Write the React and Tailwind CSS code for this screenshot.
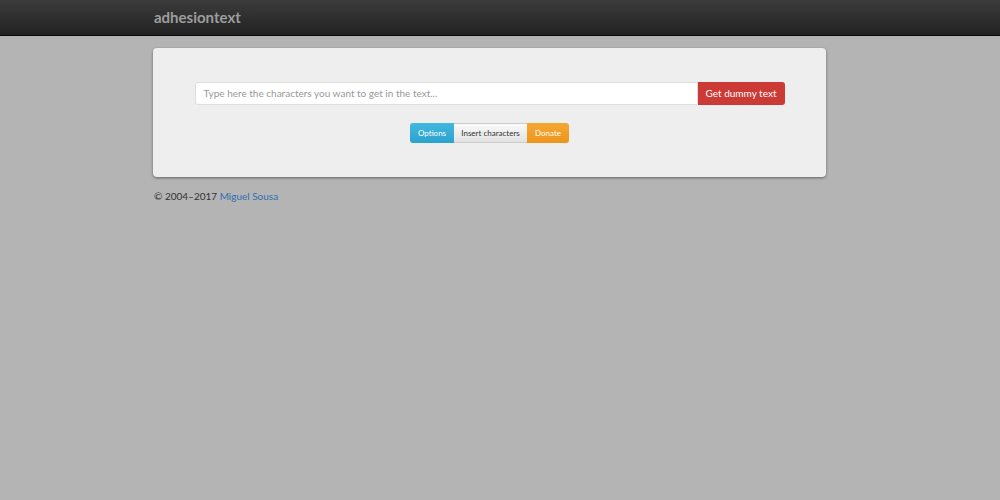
export default function App() {
  return (
    <div className="min-h-[500px] bg-[#b4b4b4]" style={{ fontFamily: "Lato, 'Open Sans', sans-serif" }}>
      <div className="h-[36px] bg-gradient-to-b from-[#3c3c3c] to-[#222] border-b border-[#080808] flex items-center">
        <div className="ml-[154px] text-[15px] font-bold text-[#9d9d9d]">adhesiontext</div>
      </div>
      <div className="ml-[153px] w-[673px] mt-[12px] h-[129px] bg-[#eeeeee] rounded-[4px] shadow-[0_1px_3px_rgba(0,0,0,0.45)] flex flex-col items-center pt-[34px]">
        <div className="flex w-[590px] h-[23px]">
          <div className="flex-1 bg-white border border-[#ddd] rounded-l-[3px] flex items-center pl-[8px] text-[10px] text-[#999]">Type here the characters you want to get in the text...</div>
          <div className="w-[87px] bg-[#cc3a36] text-white text-[10px] rounded-r-[3px] flex items-center justify-center">Get dummy text</div>
        </div>
        <div className="flex h-[20px] mt-[18px] text-[8px]">
          <div className="w-[44px] bg-gradient-to-b from-[#43b8de] to-[#2aa2cf] text-white rounded-l-[3px] flex items-center justify-center">Options</div>
          <div className="w-[73px] bg-gradient-to-b from-[#fafafa] to-[#e2e2e2] text-[#333] border-y border-[#ccc] flex items-center justify-center">Insert characters</div>
          <div className="w-[42px] bg-gradient-to-b from-[#f5a733] to-[#ec951b] text-white rounded-r-[3px] flex items-center justify-center">Donate</div>
        </div>
      </div>
      <div className="ml-[154px] mt-[12px] text-[10px] text-[#333]">© 2004–2017 <span className="text-[#2f6fb0]">Miguel Sousa</span></div>
    </div>
  );
}
